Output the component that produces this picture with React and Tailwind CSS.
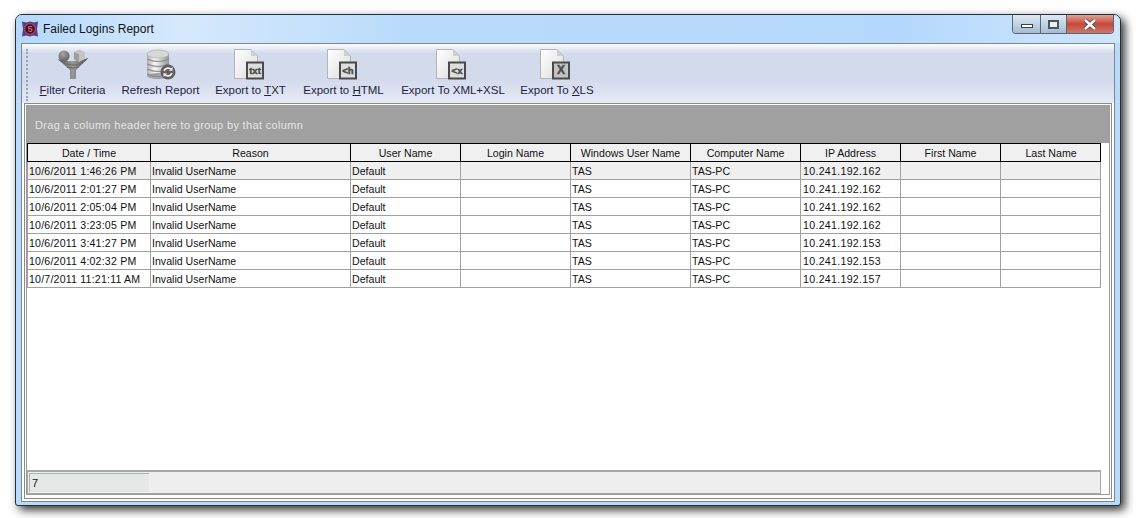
const columns = [
  { title: 'Date / Time', width: 'w-[123px]' },
  { title: 'Reason', width: 'w-[200px]' },
  { title: 'User Name', width: 'w-[110px]' },
  { title: 'Login Name', width: 'w-[110px]' },
  { title: 'Windows User Name', width: 'w-[120px]' },
  { title: 'Computer Name', width: 'w-[110px]' },
  { title: 'IP Address', width: 'w-[100px]' },
  { title: 'First Name', width: 'w-[100px]' },
  { title: 'Last Name', width: 'w-[100px]' },
];

const rows = [
  ['10/6/2011 1:46:26 PM', '10.241.192.162'],
  ['10/6/2011 2:01:27 PM', '10.241.192.162'],
  ['10/6/2011 2:05:04 PM', '10.241.192.162'],
  ['10/6/2011 3:23:05 PM', '10.241.192.162'],
  ['10/6/2011 3:41:27 PM', '10.241.192.153'],
  ['10/6/2011 4:02:32 PM', '10.241.192.153'],
  ['10/7/2011 11:21:11 AM', '10.241.192.157'],
];

function AppIcon() {
  return (
    <svg width="16" height="16" viewBox="0 0 16 16">
      <path d="M0 0.5 L4 1.5 L8 0.5 L12 1.5 L16 0.5 L15 8 L16 15.5 L12 14.5 L8 15.5 L4 14.5 L0 15.5 L1 8 Z" fill="#4a3f9a" />
      <circle cx="8" cy="8" r="5.5" fill="#1c1c40" stroke="#c23a3a" strokeWidth="1.5" />
      <text x="8" y="11" textAnchor="middle" fontSize="9" fontWeight="700" fill="#e85a5a" fontFamily="Liberation Sans">5</text>
    </svg>
  );
}

function FunnelIcon() {
  return (
    <svg width="32" height="32" viewBox="0 0 32 32">
      <defs>
        <linearGradient id="funnel" x1="0" x2="1" y1="0" y2="0">
          <stop offset="0" stopColor="#555555" />
          <stop offset="0.5" stopColor="#979797" />
          <stop offset="1" stopColor="#4a4a4a" />
        </linearGradient>
        <radialGradient id="ball" cx="0.4" cy="0.3" r="0.8">
          <stop offset="0" stopColor="#a8a8a8" />
          <stop offset="1" stopColor="#555555" />
        </radialGradient>
      </defs>
      <path d="M0.5 10 Q16 15 31.5 9 L19 21 L19 30 L13 30 L13 21 Z" fill="url(#funnel)" />
      <path d="M6 14 Q16 18 26 14 M10 18 Q16 20 22 18" fill="none" stroke="#6a6a6a" strokeWidth="1" />
      <circle cx="7" cy="7" r="5.5" fill="url(#ball)" />
      <path d="M17 3 L22 0.5 L28 3 L28 10 L22 13 L17 10 Z" fill="#c4c4c4" />
      <path d="M17 3 L22 5.5 L22 13 L17 10 Z" fill="#9c9c9c" />
    </svg>
  );
}

function DatabaseIcon() {
  return (
    <svg width="32" height="32" viewBox="0 0 32 32">
      <defs>
        <linearGradient id="disc" x1="0" x2="1" y1="0" y2="0">
          <stop offset="0" stopColor="#b0b0b0" />
          <stop offset="0.35" stopColor="#f6f6f6" />
          <stop offset="1" stopColor="#969696" />
        </linearGradient>
      </defs>
      <rect x="2" y="5" width="22" height="22" fill="url(#disc)" />
      <ellipse cx="13" cy="27" rx="11" ry="3" fill="#a2a2a2" />
      <path d="M2 10 Q13 15 24 10 M2 15 Q13 20 24 15 M2 20 Q13 25 24 20 M2 25 Q13 30 24 25" fill="none" stroke="#8a8a8a" strokeWidth="1.2" />
      <ellipse cx="13" cy="5" rx="11" ry="4" fill="#d8d8d8" stroke="#a5a5a5" strokeWidth="0.6" />
      <circle cx="23" cy="23" r="7.5" fill="#606060" />
      <path d="M19 22 A4.5 4.5 0 0 1 26.5 20.5 M27 24 A4.5 4.5 0 0 1 19.5 25.5" fill="none" stroke="#ececec" strokeWidth="1.8" />
      <path d="M27.5 18 L27.5 22 L24 21.5 Z M18.5 28 L18.5 24 L22 24.5 Z" fill="#ececec" />
    </svg>
  );
}

function DocumentIcon({ label, id, size = 9.5, badge = '#dedede' }) {
  return (
    <svg width="32" height="32" viewBox="3 0 32 32" className="overflow-visible">
      <defs>
        <linearGradient id={id} x1="0" x2="1" y1="0" y2="1">
          <stop offset="0" stopColor="#ffffff" />
          <stop offset="1" stopColor="#dcdcdc" />
        </linearGradient>
      </defs>
      <path d="M2.5 0.5 L19 0.5 L25.5 7 L25.5 29.5 L2.5 29.5 Z" fill={`url(#${id})`} stroke="#b4b4b4" />
      <path d="M19 0.5 L19 7 L25.5 7 Z" fill="#cfcfcf" />
      <rect x="15" y="13.5" width="16" height="16" fill={badge} stroke="#4a4a4a" strokeWidth="2" />
      <text x="23" y="25" textAnchor="middle" fontSize={size} fontWeight="700" fill="#4e4e4e" stroke="#4e4e4e" strokeWidth="0.5" fontFamily="Liberation Sans">{label}</text>
    </svg>
  );
}

function ToolButton({ icon, width, children }) {
  return (
    <div className={`${width} flex shrink-0 flex-col items-center text-[11.5px] leading-[14px] text-[#1b2342]`}>
      <div className="h-[32px]">{icon}</div>
      <div className="mt-[2px] whitespace-nowrap">{children}</div>
    </div>
  );
}

function WindowButtons() {
  return (
    <div className="ml-auto mr-[1px] flex h-[19px] overflow-hidden rounded-b-[4px] border border-t-0 border-[#5a6675]">
      <div className="flex w-[27px] items-end justify-center bg-gradient-to-b from-[#dfe8f2] via-[#c3d3e3] to-[#a6bbd0] pb-[5px]">
        <div className="h-[4px] w-[12px] border border-[#39424d] bg-white" />
      </div>
      <div className="flex w-[27px] items-center justify-center border-x border-[#5a6675] bg-gradient-to-b from-[#dfe8f2] via-[#c3d3e3] to-[#a6bbd0]">
        <div className="h-[9px] w-[11px] border-2 border-[#4a5562] bg-[#e6eef6]" />
      </div>
      <div className="flex w-[46px] items-center justify-center bg-gradient-to-b from-[#e0a294] via-[#c5483a] to-[#c9796c]">
        <svg width="14" height="11" viewBox="0 0 14 11">
          <path d="M2 1 L12 10 M12 1 L2 10" stroke="#4a4a4a" strokeWidth="4" />
          <path d="M2 1 L12 10 M12 1 L2 10" stroke="#ffffff" strokeWidth="2.4" />
        </svg>
      </div>
    </div>
  );
}

export default function App() {
  return (
    <div className="h-[518px] w-[1138px] overflow-hidden bg-white pl-[15px] pt-[14px] font-['Liberation_Sans',sans-serif]">
      <div className="flex h-[492px] w-[1106px] flex-col rounded-t-[7px] rounded-b-[3px] border border-[#26303a] bg-[#b9dafb] px-[5px] pb-[3px] shadow-[4px_4px_10px_rgba(0,0,0,0.8)]">
        {/* Title bar */}
        <div className="-mx-[5px] flex h-[28px] shrink-0 items-start rounded-t-[6px] bg-[linear-gradient(90deg,#b4d8fd_0%,#d6e9fc_15%,#b9dbfb_35%,#b4d8fd_80%,#cfe6fc_100%)] pl-[6px] pr-[5px]">
          <div className="mt-[6px] flex items-center gap-[5px]">
            <AppIcon />
            <span className="text-[12px] leading-[16px] text-[#111]">Failed Logins Report</span>
          </div>
          <WindowButtons />
        </div>

        {/* Outer frame */}
        <div className="flex min-h-0 flex-1 flex-col border border-[#7d8792] bg-white">
          {/* Toolbar */}
          <div className="flex h-[59px] shrink-0 bg-[linear-gradient(180deg,#fbfcfe_0%,#d3daec_16%,#d3daec_60%,#e6eaf6_100%)] pl-[4px] pt-[5px]">
            <div className="mr-[3px] h-[52px] w-[2px] border-l-2 border-dotted border-[#9aa3b5]" />
            <ToolButton width="w-[83px]" icon={<FunnelIcon />}><span className="underline">F</span>ilter Criteria</ToolButton>
            <ToolButton width="w-[93px]" icon={<DatabaseIcon />}>Refresh Report</ToolButton>
            <ToolButton width="w-[87px]" icon={<DocumentIcon id="doc-txt" label="txt" />}>Export to <span className="underline">T</span>XT</ToolButton>
            <ToolButton width="w-[99px]" icon={<DocumentIcon id="doc-html" label="<h" />}>Export to <span className="underline">H</span>TML</ToolButton>
            <ToolButton width="w-[120px]" icon={<DocumentIcon id="doc-xml" label="<x" />}>Export To XML+XSL</ToolButton>
            <ToolButton width="w-[88px]" icon={<DocumentIcon id="doc-xls" label="X" size={12} badge="#c4c4c4" />}>Export To <span className="underline">X</span>LS</ToolButton>
          </div>

          {/* Inner frame */}
          <div className="mx-[2px] mb-[2px] flex min-h-0 flex-1 flex-col border border-[#8a8a8a] bg-white px-[1px] pb-[3px] pt-[1px]">
            <div className="flex min-h-0 flex-1 flex-col border border-[#9a9a9a] bg-white">
              <div className="flex h-[37px] shrink-0 items-center bg-[#a0a0a0] pl-[8px] pt-[1px] text-[11px] tracking-[0.33px] text-[#e4e4e4]">
                Drag a column header here to group by that column
              </div>

              <div className="min-h-0 flex-1">
                <div className="flex h-[19px] w-[1074px] border border-black bg-[#f0f0f0]">
                  {columns.map((col, i) => (
                    <div
                      key={col.title}
                      className={`${col.width} shrink-0 border-black text-center text-[10.6px] leading-[19px] text-[#111] ${i < columns.length - 1 ? 'border-r' : ''}`}
                    >
                      {col.title}
                    </div>
                  ))}
                </div>
                {rows.map(([time, ip], r) => {
                  const cells = [time, 'Invalid UserName', 'Default', '', 'TAS', 'TAS-PC', ip, '', ''];
                  return (
                    <div key={time} className={`flex h-[18px] w-[1074px] border-x border-b border-[#a0a0a0] ${r === 0 ? 'bg-[#efefef]' : 'bg-white'}`}>
                      {cells.map((text, i) => (
                        <div
                          key={i}
                          className={`${columns[i].width} shrink-0 overflow-hidden whitespace-nowrap border-[#a0a0a0] text-[10.6px] leading-[19px] text-[#111] ${i < cells.length - 1 ? 'border-r' : ''} ${i === 6 ? 'pl-[2px] tracking-[0.3px]' : 'pl-[1px]'} ${i === 0 ? 'tracking-[0.2px]' : ''}`}
                        >
                          {text}
                        </div>
                      ))}
                    </div>
                  );
                })}
              </div>

              {/* Summary footer */}
              <div className="h-[24px] w-[1074px] shrink-0 border-x border-b border-t-2 border-[#a8a8a8] bg-[#eeeeee] pl-[1px] pt-[1px]">
                <div className="h-[19px] w-[120px] border-l border-t border-[#b0b0b0] bg-[#e6e8e8] pl-[2px] text-[11px] leading-[18px] text-[#111]">7</div>
              </div>
            </div>
          </div>
        </div>
      </div>
    </div>
  );
}
